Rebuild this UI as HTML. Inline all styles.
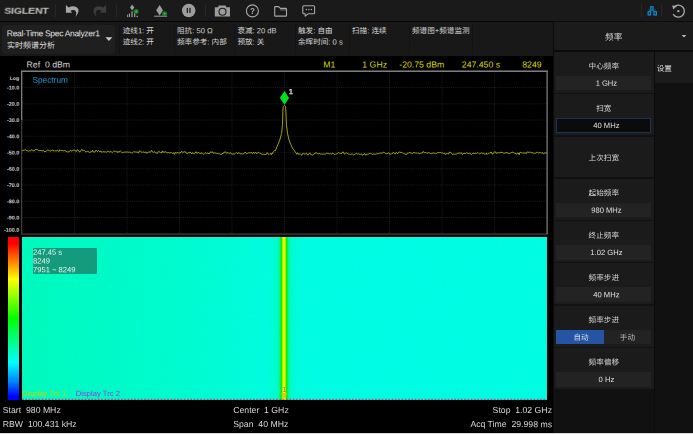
<!DOCTYPE html>
<html><head><meta charset="utf-8"><title>SIGLENT Real-Time Spec Analyzer</title>
<style>
html,body{margin:0;padding:0;background:#000;}
body{width:693px;height:434px;position:relative;overflow:hidden;font-family:"Liberation Sans","Noto Sans CJK SC",sans-serif;color:#d8d8d8;}
div{position:absolute;box-sizing:border-box;white-space:pre;}
.tx{left:0;top:0;}
svg{position:absolute;left:0;top:0;}
#tb{left:0;top:0;width:693px;height:21px;background:#1a1a1a;}
#gap1{left:0;top:20.8px;width:693px;height:1.5px;background:#040404;}
#ib{left:0;top:22.3px;width:552.6px;height:33.4px;background:#181818;}
#mode{left:1.8px;top:24.7px;width:113.2px;height:29px;background:#1f1f1f;border-radius:4px;}
.it{font-size:7.6px;line-height:11.1px;color:#d6d6d6;}
.sep{width:1px;top:23.6px;height:31.6px;background:#131313;}
.vs{width:1px;top:4px;height:13px;background:#272727;}
#plotbg{left:0;top:55.7px;width:553px;height:378.3px;background:#000;}
.t9{font-size:8.7px;line-height:10px;color:#d8d8d8;}
.yl{font-size:5.4px;line-height:7px;font-weight:bold;color:#d0d0d0;}
.mk{font-size:8.7px;line-height:10px;color:#d6d600;}
#rp{left:552.6px;top:21px;width:140.4px;height:413px;background:#0b0b0b;}
#rh{left:553.7px;top:22.3px;width:139.3px;height:28.1px;background:#1b1b1b;}
#side{left:655px;top:51.9px;width:38px;height:382px;background:#111;}
#stab{left:655px;top:51.9px;width:38px;height:31.2px;background:#1b1b1b;}
#colbg{left:553.7px;top:51.9px;width:100.2px;height:382px;background:#111;}
.btn{left:553.7px;width:100.2px;height:40.9px;background:#1b1b1b;}
.bl{font-size:7.6px;line-height:10px;color:#d6d6d6;}
.bv{left:555.8px;width:95.6px;height:14.7px;background:#232323;}
.bv.act{background:#0b0b0b;border:1px solid #1b3359;}
.tg{left:555.8px;width:95.6px;height:13.9px;background:#232323;}
.tga{left:555.8px;width:48.4px;height:13.9px;background:#2454a2;}
#wf{left:22px;top:237.3px;width:525px;height:162.3px;background:linear-gradient(90deg,#00f8b2 0%,#00f9c2 20%,#00fad2 38%,#00fbde 47%,#00fbe2 53%,#00fbe4 70%,#00fbe2 100%);}
#wfl{left:267.3px;top:237.3px;width:34px;height:162.3px;background:linear-gradient(90deg,rgba(0,255,180,0) 0.00%,rgba(0,252,150,.16) 20.59%,rgba(0,252,150,.36) 32.35%,rgba(0,246,100,.62) 37.06%,#0cf224 40.00%,#10ee10 43.24%,#3cee00 44.41%,#f4ff00 46.91%,#f4ff00 53.09%,#3cee00 55.59%,#10ee10 56.76%,#0cf224 60.00%,rgba(0,246,100,.62) 62.94%,rgba(0,252,150,.36) 67.65%,rgba(0,252,150,.16) 79.41%,rgba(0,255,180,0) 100.00%);}
#cb{left:8px;top:237px;width:11px;height:163px;background:linear-gradient(180deg,#ff0000 0%,#ff0000 4%,#ff8000 15%,#ffff00 26%,#80ff00 38%,#00ff00 50%,#00ff80 63%,#00ffff 77%,#0080ff 89%,#0000ff 98%,#0000ff 100%);}
#ibx{left:32.8px;top:247.7px;width:64.6px;height:26.2px;background:rgba(28,118,98,.72);}
.ibt{font-size:7.6px;line-height:8.75px;color:#e8f4f0;}
#bot{left:0;top:432.6px;width:693px;height:1.4px;background:#d8d8d8;}
</style></head><body>
<div id="tb"></div><div id="gap1"></div>
<div id="ib"></div><div id="mode"></div>
<div class="sep" style="left:119px"></div><div class="sep" style="left:174px"></div><div class="sep" style="left:234px"></div><div class="sep" style="left:294.6px"></div><div class="sep" style="left:348.6px"></div><div class="sep" style="left:409px"></div><div class="sep" style="left:472px"></div>
<div class="tx it" style="transform:translate(6.80px,28.20px) rotate(0.03deg);font-size:8.5px;line-height:10.6px;letter-spacing:-0.31px;color:#e0e0e0;">Real-Time Spec Analyzer1</div>
<div class="tx it" style="transform:translate(6.90px,40.00px) rotate(0.03deg);font-size:8px;line-height:11px;color:#e0e0e0;">实时频谱分析</div>
<div class="tx it" style="transform:translate(122.70px,25.30px) rotate(0.03deg);">迹线1: 开</div>
<div class="tx it" style="transform:translate(122.70px,36.40px) rotate(0.03deg);">迹线2: 开</div>
<div class="tx it" style="transform:translate(177.00px,25.30px) rotate(0.03deg);">阻抗: 50 Ω</div>
<div class="tx it" style="transform:translate(177.00px,36.40px) rotate(0.03deg);">频率参考: 内部</div>
<div class="tx it" style="transform:translate(237.40px,25.30px) rotate(0.03deg);">衰减: 20 dB</div>
<div class="tx it" style="transform:translate(237.40px,36.40px) rotate(0.03deg);">预放: 关</div>
<div class="tx it" style="transform:translate(298.00px,25.30px) rotate(0.03deg);">触发: 自由</div>
<div class="tx it" style="transform:translate(298.00px,36.40px) rotate(0.03deg);">余晖时间: 0 s</div>
<div class="tx it" style="transform:translate(352.00px,25.30px) rotate(0.03deg);">扫描: 连续</div>
<div class="tx it" style="transform:translate(412.00px,25.30px) rotate(0.03deg);">频谱图+频谱监测</div>

<div class="tx" id="logo" style="transform-origin:0 0;transform:translate(4.7px,5.8px) scaleX(1.155) skewX(-3deg);font-size:9.2px;line-height:11px;font-weight:bold;color:#bfc1bb;letter-spacing:-0.2px;will-change:transform">SIGLENT</div>
<div class="vs" style="left:55px"></div><div class="vs" style="left:116px"></div><div class="vs" style="left:204.6px"></div><div class="vs" style="left:641.2px"></div><div class="vs" style="left:661.1px"></div>

<svg width="693" height="22" viewBox="0 0 693 22">
<!-- undo -->
<path d="M65.9 4.9 L65.9 12.8 L72.2 12.8 L70.4 10.7 C72.4 9.4 75.4 9.6 76.1 12 C76.5 13.6 76 15.4 75.3 16.9 C77.6 14.8 79 12 78.4 9.6 C77.6 6.4 73 5.2 68.7 7.4 Z" fill="#a6a9a6"/>
<!-- redo dim -->
<path d="M106.1 4.9 L106.1 12.8 L99.8 12.8 L101.6 10.7 C99.6 9.4 96.6 9.6 95.9 12 C95.5 13.6 96 15.4 96.7 16.9 C94.4 14.8 93 12 93.6 9.6 C94.4 6.4 99 5.2 103.3 7.4 Z" fill="#3a3e3c"/>
<!-- marker peak icon -->
<g fill="#9a9d9a"><path d="M132.15 4.6 L134.3 7.6 L132.15 10.6 L130 7.6 Z"/><rect x="127.1" y="14.6" width="1" height="2.5"/><rect x="128.9" y="13.5" width="1.1" height="3.6"/><rect x="131.4" y="11.4" width="1.3" height="5.7"/><rect x="134.1" y="13.1" width="1.2" height="4"/><rect x="136.5" y="15.8" width="1.4" height="1.3"/></g>
<circle cx="136.1" cy="11.4" r="2.5" fill="#1b8029"/><path d="M135 11.4 L136.9 10.4 V12.4 Z" fill="#6cb878"/>
<g fill="#9a9d9a"><path d="M159.6 4.9 L163 10.2 L159.6 15.5 L156.2 10.2 Z"/><rect x="154.1" y="15.7" width="13" height="1"/></g>
<circle cx="164.6" cy="13.65" r="2.5" fill="#1b8029"/><path d="M163.6 13 H165.6 L164.6 14.7 Z" fill="#6cb878"/>
<!-- pause -->
<circle cx="188.7" cy="10.4" r="6.75" fill="#9c9e9c"/><rect x="186.7" y="7.9" width="1.35" height="5" fill="#222"/><rect x="189.3" y="7.9" width="1.35" height="5" fill="#222"/>
<!-- camera -->
<path d="M214.8 7.3 H218 L218.8 5.6 H225.6 L226.4 7.3 H230 V16.6 H214.8 Z" fill="#9a9c9a"/><circle cx="222.5" cy="11.8" r="3.5" fill="none" stroke="#1b1b1b" stroke-width="1.1"/>
<!-- help -->
<circle cx="252.4" cy="10.9" r="6" fill="none" stroke="#a8a8a8" stroke-width="1.1"/>
<text x="252.4" y="13.8" font-size="8.2" font-weight="bold" fill="#a8a8a8" text-anchor="middle" font-family="Liberation Sans, sans-serif">?</text>
<!-- folder -->
<path d="M274.7 7 Q274.7 6.6 275.2 6.6 H278.6 L280.4 8.4 H285.6 Q286.5 8.4 286.5 9.3 V15.4 Q286.5 16.1 285.8 16.1 H275.4 Q274.7 16.1 274.7 15.4 Z" fill="none" stroke="#a8a8a8" stroke-width="1.1" stroke-linejoin="round"/>
<path d="M280.2 9.9 H286" fill="none" stroke="#a8a8a8" stroke-width=".7"/>
<!-- chat -->
<path d="M303.8 5.7 H313.6 Q314.6 5.7 314.6 6.7 V12.8 Q314.6 13.8 313.6 13.8 H308 L305.2 16.2 V13.8 H303.8 Q302.8 13.8 302.8 12.8 V6.7 Q302.8 5.7 303.8 5.7 Z" fill="none" stroke="#a8a8a8" stroke-width="1.1" stroke-linejoin="round"/>
<circle cx="306.4" cy="9.6" r=".75" fill="#a8a8a8"/><circle cx="308.9" cy="9.6" r=".75" fill="#a8a8a8"/><circle cx="311.4" cy="9.6" r=".75" fill="#a8a8a8"/>
<!-- network -->
<g fill="#0c2a40" stroke="#1488d0" stroke-width="1.2"><rect x="650.7" y="6.8" width="2.4" height="3.3"/><rect x="648.1" y="11.7" width="2.5" height="3.3"/><rect x="653.9" y="11.7" width="2.5" height="3.3"/></g>
<path d="M650.4 10.6 L648.4 9.6 M653.4 10.6 L655.6 9.6" stroke="#1488d0" stroke-width=".7" fill="none"/>
<!-- refresh -->
<path d="M674.1 6.86 A6 6 0 1 1 673.15 14.1" fill="none" stroke="#a8aaa8" stroke-width="1.3"/><path d="M672.2 5.4 L677 6 L673.2 9.6 Z" fill="#a8aaa8"/><circle cx="678.35" cy="11.1" r="1.2" fill="#a8aaa8"/>
</svg>

<div id="plotbg"></div>
<div class="tx t9" style="transform:translate(26.60px,59.40px) rotate(0.03deg);">Ref  0 dBm</div>
<div class="tx mk" style="transform:translate(323.30px,59.40px) rotate(0.03deg);">M1</div>
<div class="tx mk" style="transform:translate(327.00px,59.40px) rotate(0.03deg);width:60.0px;text-align:right;">1 GHz</div>
<div class="tx mk" style="transform:translate(384.20px,59.40px) rotate(0.03deg);width:60.0px;text-align:right;">-20.75 dBm</div>
<div class="tx mk" style="transform:translate(440.00px,59.40px) rotate(0.03deg);width:60.0px;text-align:right;">247.450 s</div>
<div class="tx mk" style="transform:translate(481.60px,59.40px) rotate(0.03deg);width:60.0px;text-align:right;">8249</div>

<div class="tx yl" style="transform:translate(0.00px,75.10px) rotate(0.03deg);width:19.1px;text-align:right;font-size:5.1px;">Log</div>
<div class="tx yl" style="transform:translate(0.00px,84.45px) rotate(0.03deg);width:19.3px;text-align:right;">-10.0</div>
<div class="tx yl" style="transform:translate(0.00px,100.70px) rotate(0.03deg);width:19.3px;text-align:right;">-20.0</div>
<div class="tx yl" style="transform:translate(0.00px,116.95px) rotate(0.03deg);width:19.3px;text-align:right;">-30.0</div>
<div class="tx yl" style="transform:translate(0.00px,133.20px) rotate(0.03deg);width:19.3px;text-align:right;">-40.0</div>
<div class="tx yl" style="transform:translate(0.00px,149.45px) rotate(0.03deg);width:19.3px;text-align:right;">-50.0</div>
<div class="tx yl" style="transform:translate(0.00px,165.70px) rotate(0.03deg);width:19.3px;text-align:right;">-60.0</div>
<div class="tx yl" style="transform:translate(0.00px,181.95px) rotate(0.03deg);width:19.3px;text-align:right;">-70.0</div>
<div class="tx yl" style="transform:translate(0.00px,198.20px) rotate(0.03deg);width:19.3px;text-align:right;">-80.0</div>
<div class="tx yl" style="transform:translate(0.00px,214.45px) rotate(0.03deg);width:19.3px;text-align:right;">-90.0</div>
<div class="tx yl" style="transform:translate(0.00px,226.70px) rotate(0.03deg);width:19.3px;text-align:right;">-100.0</div>

<svg width="553" height="434" viewBox="0 0 553 434">
<g stroke="#252525" stroke-width="0.8" stroke-dasharray="1.1 1.1"><line x1="74.50" y1="71.3" x2="74.50" y2="233.8"/><line x1="127.00" y1="71.3" x2="127.00" y2="233.8"/><line x1="179.50" y1="71.3" x2="179.50" y2="233.8"/><line x1="232.00" y1="71.3" x2="232.00" y2="233.8"/><line x1="284.50" y1="71.3" x2="284.50" y2="233.8"/><line x1="337.00" y1="71.3" x2="337.00" y2="233.8"/><line x1="389.50" y1="71.3" x2="389.50" y2="233.8"/><line x1="442.00" y1="71.3" x2="442.00" y2="233.8"/><line x1="494.50" y1="71.3" x2="494.50" y2="233.8"/><line x1="22.0" y1="87.55" x2="547.0" y2="87.55"/><line x1="22.0" y1="103.80" x2="547.0" y2="103.80"/><line x1="22.0" y1="120.05" x2="547.0" y2="120.05"/><line x1="22.0" y1="136.30" x2="547.0" y2="136.30"/><line x1="22.0" y1="152.55" x2="547.0" y2="152.55"/><line x1="22.0" y1="168.80" x2="547.0" y2="168.80"/><line x1="22.0" y1="185.05" x2="547.0" y2="185.05"/><line x1="22.0" y1="201.30" x2="547.0" y2="201.30"/><line x1="22.0" y1="217.55" x2="547.0" y2="217.55"/></g>
<rect x="21.6" y="71" width="525.6" height="163.1" fill="none" stroke="#3e3e3e" stroke-width="1.3"/>
<line x1="21.2" y1="71.3" x2="547.7" y2="71.3" stroke="#9a9a9a" stroke-width="1.05"/><line x1="21.7" y1="71" x2="21.7" y2="120" stroke="#8a8a8a" stroke-width="1.05"/>
<line x1="547.1" y1="71" x2="547.1" y2="234" stroke="#828282" stroke-width="0.9"/>
<polyline points="22.0,150.1 22.8,150.6 23.6,150.3 24.5,150.1 25.3,149.7 26.1,150.0 26.9,150.9 27.7,150.8 28.6,151.2 29.4,150.8 30.2,150.8 31.0,150.7 31.8,149.5 32.7,150.7 33.5,150.9 34.3,150.9 35.1,149.6 35.9,149.1 36.8,149.5 37.6,149.9 38.4,150.5 39.2,150.5 40.0,150.9 40.9,150.3 41.7,150.7 42.5,150.9 43.3,150.3 44.1,151.6 45.0,151.3 45.8,151.6 46.6,150.6 47.4,150.2 48.2,150.3 49.1,150.5 49.9,151.0 50.7,151.0 51.5,150.5 52.4,150.1 53.2,150.2 54.0,151.3 54.8,150.5 55.6,150.8 56.5,151.1 57.3,150.0 58.1,150.6 58.9,151.6 59.7,149.8 60.6,150.3 61.4,150.6 62.2,150.3 63.0,151.0 63.8,150.9 64.7,150.0 65.5,151.1 66.3,151.4 67.1,151.7 67.9,152.1 68.8,151.6 69.6,151.3 70.4,150.3 71.2,151.1 72.0,150.7 72.9,150.6 73.7,150.1 74.5,150.1 75.3,150.4 76.1,151.7 77.0,150.0 77.8,149.8 78.6,150.8 79.4,151.9 80.2,151.8 81.1,150.2 81.9,149.3 82.7,150.7 83.5,150.6 84.3,150.3 85.2,151.5 86.0,152.0 86.8,151.6 87.6,151.5 88.4,151.6 89.3,152.4 90.1,152.1 90.9,151.9 91.7,151.9 92.5,150.5 93.4,151.9 94.2,152.1 95.0,152.0 95.8,150.4 96.6,150.6 97.5,151.7 98.3,150.4 99.1,150.9 99.9,151.9 100.8,150.8 101.6,152.2 102.4,152.1 103.2,151.6 104.0,151.7 104.9,152.0 105.7,151.8 106.5,152.3 107.3,151.4 108.1,151.2 109.0,152.1 109.8,151.8 110.6,151.1 111.4,152.0 112.2,152.7 113.1,151.7 113.9,150.8 114.7,151.3 115.5,151.4 116.3,151.4 117.2,152.5 118.0,151.3 118.8,152.4 119.6,151.2 120.4,151.0 121.3,151.9 122.1,152.5 122.9,152.6 123.7,152.3 124.5,152.0 125.4,152.0 126.2,152.2 127.0,151.9 127.8,152.0 128.6,152.3 129.5,152.0 130.3,152.4 131.1,152.4 131.9,153.3 132.7,152.6 133.6,151.9 134.4,151.7 135.2,151.8 136.0,152.5 136.8,151.9 137.7,152.2 138.5,153.2 139.3,150.8 140.1,150.9 140.9,151.8 141.8,152.2 142.6,152.3 143.4,151.9 144.2,152.4 145.0,152.4 145.9,151.9 146.7,153.5 147.5,152.8 148.3,152.0 149.1,152.0 150.0,152.0 150.8,152.1 151.6,150.4 152.4,151.3 153.2,152.5 154.1,151.6 154.9,152.0 155.7,152.7 156.5,153.0 157.4,153.4 158.2,151.6 159.0,151.8 159.8,151.9 160.6,152.6 161.5,153.1 162.3,150.9 163.1,152.5 163.9,151.5 164.7,152.5 165.6,151.5 166.4,152.2 167.2,153.1 168.0,152.6 168.8,152.6 169.7,153.0 170.5,152.7 171.3,152.5 172.1,153.4 172.9,153.5 173.8,152.7 174.6,154.3 175.4,152.4 176.2,153.1 177.0,152.6 177.9,152.6 178.7,153.0 179.5,152.9 180.3,153.1 181.1,151.8 182.0,151.4 182.8,152.6 183.6,152.0 184.4,151.8 185.2,151.5 186.1,153.0 186.9,153.3 187.7,153.8 188.5,152.5 189.3,152.7 190.2,152.0 191.0,153.0 191.8,153.8 192.6,152.6 193.4,153.7 194.3,153.7 195.1,153.0 195.9,151.7 196.7,153.3 197.5,152.9 198.4,152.5 199.2,153.0 200.0,153.2 200.8,153.9 201.6,152.6 202.5,153.5 203.3,154.1 204.1,154.2 204.9,153.3 205.8,152.6 206.6,153.5 207.4,153.2 208.2,153.2 209.0,153.9 209.9,153.2 210.7,151.7 211.5,152.3 212.3,151.7 213.1,153.1 214.0,153.3 214.8,152.8 215.6,153.0 216.4,153.6 217.2,153.3 218.1,154.0 218.9,153.4 219.7,153.9 220.5,154.4 221.3,154.6 222.2,153.3 223.0,153.8 223.8,152.3 224.6,152.2 225.4,151.7 226.3,153.4 227.1,152.5 227.9,153.0 228.7,153.1 229.5,153.2 230.4,152.9 231.2,153.3 232.0,154.5 232.8,153.8 233.6,153.8 234.5,154.2 235.3,153.5 236.1,152.7 236.9,152.8 237.7,153.9 238.6,152.6 239.4,152.8 240.2,153.8 241.0,154.1 241.8,153.7 242.7,154.1 243.5,153.8 244.3,152.9 245.1,152.3 245.9,152.7 246.8,153.8 247.6,153.3 248.4,152.9 249.2,152.9 250.0,152.4 250.9,153.1 251.7,152.7 252.5,153.5 253.3,152.1 254.1,153.3 255.0,153.1 255.8,152.3 256.6,153.6 257.4,153.5 258.2,152.2 259.1,152.6 259.9,153.5 260.7,153.3 261.5,154.0 262.4,154.3 263.2,154.3 264.0,154.1 264.8,154.7 265.6,154.4 266.5,154.2 267.3,152.6 268.1,153.9 268.9,154.6 269.7,153.8 270.6,153.5 271.4,154.8 272.2,153.0 272.2,153.7 273.3,151.8 274.4,150.6 275.2,150.9 276.1,149.0 277.9,144.5 279.8,139.9 281.6,133.4 282.5,124.2 282.9,111.3 283.2,106.6 284.4,105.3 285.6,106.6 285.9,111.3 286.4,124.2 287.5,133.4 289.0,139.9 290.8,144.5 293.0,149.0 294.2,150.2 295.4,152.2 296.7,153.8 296.8,154.3 297.6,152.8 298.4,154.2 299.3,154.2 300.1,153.6 300.9,154.6 301.7,155.3 302.5,153.5 303.4,153.3 304.2,153.9 305.0,154.0 305.8,153.7 306.6,153.2 307.5,154.9 308.3,154.9 309.1,153.5 309.9,152.9 310.8,154.6 311.6,154.7 312.4,155.3 313.2,154.8 314.0,153.6 314.9,153.9 315.7,152.5 316.5,152.9 317.3,153.5 318.1,154.0 319.0,153.4 319.8,153.6 320.6,154.0 321.4,154.1 322.2,154.3 323.1,154.1 323.9,153.7 324.7,154.2 325.5,154.0 326.3,153.3 327.2,153.2 328.0,153.6 328.8,153.6 329.6,153.8 330.4,153.8 331.3,153.9 332.1,153.7 332.9,153.0 333.7,153.7 334.5,154.4 335.4,154.2 336.2,153.8 337.0,154.0 337.8,153.2 338.6,152.4 339.5,153.3 340.3,153.0 341.1,153.9 341.9,153.1 342.7,151.9 343.6,152.4 344.4,154.2 345.2,153.6 346.0,152.8 346.8,152.9 347.7,153.7 348.5,154.0 349.3,153.9 350.1,154.7 350.9,154.5 351.8,153.9 352.6,154.1 353.4,154.8 354.2,154.7 355.0,154.6 355.9,153.3 356.7,153.4 357.5,154.0 358.3,153.6 359.1,154.3 360.0,154.2 360.8,154.4 361.6,153.8 362.4,155.2 363.2,155.0 364.1,153.9 364.9,153.8 365.7,155.3 366.5,154.0 367.4,154.3 368.2,154.4 369.0,153.9 369.8,153.0 370.6,153.5 371.5,153.8 372.3,154.3 373.1,154.3 373.9,153.8 374.7,154.2 375.6,154.1 376.4,153.9 377.2,153.7 378.0,153.5 378.8,153.9 379.7,153.0 380.5,153.0 381.3,153.3 382.1,152.6 382.9,152.9 383.8,152.1 384.6,152.6 385.4,153.5 386.2,153.9 387.0,153.6 387.9,153.4 388.7,152.6 389.5,154.3 390.3,154.1 391.1,154.4 392.0,153.3 392.8,153.3 393.6,152.3 394.4,153.5 395.2,154.1 396.1,152.5 396.9,153.1 397.7,153.7 398.5,152.5 399.3,152.0 400.2,152.3 401.0,152.6 401.8,152.3 402.6,153.1 403.4,153.5 404.3,153.8 405.1,154.0 405.9,154.6 406.7,154.5 407.5,153.0 408.4,153.0 409.2,152.6 410.0,152.5 410.8,153.0 411.6,153.3 412.5,153.7 413.3,152.5 414.1,152.3 414.9,153.0 415.8,153.1 416.6,153.1 417.4,153.2 418.2,152.9 419.0,153.6 419.9,153.7 420.7,153.4 421.5,153.0 422.3,153.1 423.1,151.6 424.0,152.1 424.8,152.9 425.6,152.3 426.4,153.1 427.2,153.3 428.1,152.5 428.9,152.9 429.7,153.0 430.5,153.5 431.3,153.8 432.2,153.4 433.0,152.8 433.8,153.0 434.6,153.2 435.4,153.7 436.3,153.6 437.1,153.0 437.9,152.3 438.7,152.7 439.5,152.6 440.4,152.4 441.2,152.9 442.0,152.8 442.8,153.2 443.6,153.6 444.5,153.1 445.3,154.6 446.1,153.5 446.9,154.0 447.7,153.6 448.6,154.1 449.4,152.0 450.2,152.3 451.0,153.1 451.8,153.5 452.7,154.8 453.5,154.0 454.3,154.3 455.1,154.1 455.9,154.1 456.8,153.8 457.6,153.3 458.4,153.6 459.2,152.6 460.0,153.7 460.9,152.7 461.7,153.2 462.5,154.5 463.3,153.5 464.1,153.3 465.0,153.9 465.8,153.4 466.6,152.8 467.4,153.2 468.2,153.5 469.1,153.7 469.9,152.9 470.7,154.1 471.5,154.5 472.4,153.6 473.2,153.5 474.0,153.0 474.8,153.9 475.6,153.0 476.5,153.5 477.3,152.9 478.1,152.6 478.9,153.4 479.7,154.0 480.6,153.4 481.4,152.8 482.2,153.5 483.0,153.2 483.8,153.3 484.7,154.1 485.5,154.1 486.3,153.1 487.1,154.5 487.9,153.6 488.8,153.7 489.6,152.9 490.4,153.0 491.2,151.9 492.0,153.8 492.9,154.1 493.7,152.7 494.5,152.0 495.3,151.7 496.1,153.3 497.0,152.8 497.8,152.9 498.6,152.8 499.4,152.9 500.2,152.3 501.1,152.8 501.9,152.0 502.7,152.6 503.5,153.1 504.3,153.3 505.2,153.0 506.0,152.4 506.8,152.9 507.6,152.6 508.4,153.8 509.3,153.7 510.1,153.2 510.9,152.7 511.7,152.4 512.5,152.2 513.4,152.5 514.2,153.0 515.0,153.3 515.8,153.4 516.6,154.4 517.5,153.0 518.3,153.0 519.1,154.7 519.9,152.4 520.8,152.4 521.6,152.8 522.4,153.0 523.2,153.2 524.0,152.9 524.9,153.1 525.7,153.0 526.5,153.4 527.3,151.9 528.1,152.0 529.0,152.6 529.8,152.1 530.6,152.0 531.4,152.9 532.2,152.5 533.1,153.1 533.9,153.4 534.7,153.2 535.5,153.3 536.3,152.9 537.2,152.0 538.0,152.5 538.8,153.0 539.6,152.6 540.4,152.7 541.3,153.2 542.1,152.4 542.9,153.1 543.7,154.1 544.5,152.9 545.4,152.9 546.2,152.8 547.0,153.7" fill="none" stroke="#cccc12" stroke-width="0.8" stroke-linejoin="round"/>
<path d="M284.5 91.1 L289.1 97.9 L284.5 104.7 L279.9 97.9 Z" fill="#00e11e"/>
<text x="288.7" y="93.8" font-size="7.7" fill="#e4e6ea" stroke="#e4e6ea" stroke-width=".25" font-family="Liberation Sans, sans-serif">1</text>
</svg>
<div class="tx t9" style="transform:translate(32.40px,74.80px) rotate(0.03deg);color:#1aa0d2;font-size:8.3px;">Spectrum</div>

<div id="cb"></div>
<div id="wf"></div><svg width="553" height="434" viewBox="0 0 553 434"><filter id="nz" x="0" y="0" width="100%" height="100%"><feTurbulence type="fractalNoise" baseFrequency="0.75" numOctaves="2" seed="4"/><feColorMatrix type="matrix" values="0 0 0 0 0  0 0 0 0 1  2.2 0 0 0 -0.3  0 0 0 0 0.24"/></filter><rect x="22" y="237.3" width="525" height="162.3" filter="url(#nz)"/></svg><div id="wfl"></div>
<div id="ibx"></div>
<div class="tx ibt" style="transform:translate(33.00px,248.70px) rotate(0.03deg);">247.45 s</div>
<div class="tx ibt" style="transform:translate(33.00px,257.45px) rotate(0.03deg);">8249</div>
<div class="tx ibt" style="transform:translate(33.00px,266.20px) rotate(0.03deg);">7951 ~ 8249</div>

<div class="tx t9" style="transform:translate(22.10px,389.00px) rotate(0.03deg);color:#c4d400;font-size:7.65px;">Display Trc 1</div>

<div class="tx t9" style="transform:translate(75.80px,389.00px) rotate(0.03deg);color:#9838dc;font-size:7.65px;">Display Trc 2</div>

<svg width="553" height="434" viewBox="0 0 553 434">
<line x1="22" y1="399.3" x2="547" y2="399.3" stroke="#c8308a" stroke-width="1" stroke-dasharray="1.7 1.6"/>
<path d="M281.3 393 H287.1 L284.2 398.9 Z" fill="#e6c800"/>
<text x="284.2" y="391.7" font-size="7" text-anchor="middle" fill="#e23ca4" font-family="Liberation Sans, sans-serif">1</text>
</svg>
<div class="tx t9" style="transform:translate(2.80px,405.00px) rotate(0.03deg);">Start  980 MHz</div>
<div class="tx t9" style="transform:translate(2.80px,419.10px) rotate(0.03deg);">RBW  100.431 kHz</div>
<div class="tx t9" style="transform:translate(233.20px,405.00px) rotate(0.03deg);">Center  1 GHz</div>
<div class="tx t9" style="transform:translate(233.20px,419.10px) rotate(0.03deg);">Span  40 MHz</div>
<div class="tx t9" style="transform:translate(402.00px,405.00px) rotate(0.03deg);width:150.0px;text-align:right;">Stop  1.02 GHz</div>
<div class="tx t9" style="transform:translate(402.00px,419.10px) rotate(0.03deg);width:150.0px;text-align:right;">Acq Time  29.998 ms</div>

<div id="rp"></div><div id="rh"></div>
<div class="tx it" style="transform:translate(553.70px,32.00px) rotate(0.03deg);width:120.0px;text-align:center;font-size:8.6px;line-height:10px;">频率</div>

<svg width="693" height="60" viewBox="0 0 693 60"><path d="M681.6 34.9 H686.4 L684 37.5 Z" fill="#b4b4b4"/><path d="M105.4 37.3 H112.4 L108.9 41 Z" fill="#c8c8c8"/></svg>
<div id="colbg"></div><div id="side"></div><div id="stab"></div>
<div class="tx bl" style="transform:translate(656.70px,64.10px) rotate(0.03deg);">设置</div>

<div class="btn" style="top:51.9px"></div><div class="tx bl" style="transform:translate(553.70px,61.70px) rotate(0.03deg);width:100.2px;text-align:center;">中心频率</div>
<div class="bv" style="top:75.8px"></div><div class="tx bl" style="transform:translate(561.40px,78.80px) rotate(0.03deg);width:90.0px;text-align:center;color:#e0e0e0;">1 GHz</div>
<div class="btn" style="top:94.2px"></div><div class="tx bl" style="transform:translate(553.70px,104.00px) rotate(0.03deg);width:100.2px;text-align:center;">扫宽</div>
<div class="bv act" style="top:118.1px"></div><div class="tx bl" style="transform:translate(561.40px,121.10px) rotate(0.03deg);width:90.0px;text-align:center;color:#e0e0e0;">40 MHz</div>
<div class="btn" style="top:136.5px"></div><div class="tx bl" style="transform:translate(553.70px,153.50px) rotate(0.03deg);width:100.2px;text-align:center;">上次扫宽</div>
<div class="btn" style="top:178.8px"></div><div class="tx bl" style="transform:translate(553.70px,188.60px) rotate(0.03deg);width:100.2px;text-align:center;">起始频率</div>
<div class="bv" style="top:202.7px"></div><div class="tx bl" style="transform:translate(561.40px,205.70px) rotate(0.03deg);width:90.0px;text-align:center;color:#e0e0e0;">980 MHz</div>
<div class="btn" style="top:221.1px"></div><div class="tx bl" style="transform:translate(553.70px,230.90px) rotate(0.03deg);width:100.2px;text-align:center;">终止频率</div>
<div class="bv" style="top:245.0px"></div><div class="tx bl" style="transform:translate(561.40px,248.00px) rotate(0.03deg);width:90.0px;text-align:center;color:#e0e0e0;">1.02 GHz</div>
<div class="btn" style="top:263.4px"></div><div class="tx bl" style="transform:translate(553.70px,273.20px) rotate(0.03deg);width:100.2px;text-align:center;">频率步进</div>
<div class="bv" style="top:287.3px"></div><div class="tx bl" style="transform:translate(561.40px,290.30px) rotate(0.03deg);width:90.0px;text-align:center;color:#e0e0e0;">40 MHz</div>
<div class="btn" style="top:305.7px"></div><div class="tx bl" style="transform:translate(553.70px,315.50px) rotate(0.03deg);width:100.2px;text-align:center;">频率步进</div>
<div class="tg" style="top:330.0px"></div><div class="tga" style="top:330.0px"></div><div class="tx bl" style="transform:translate(555.80px,333.00px) rotate(0.03deg);width:50.4px;text-align:center;color:#d4dcec;">自动</div>
<div class="tx bl" style="transform:translate(603.40px,333.00px) rotate(0.03deg);width:48.0px;text-align:center;color:#bcbcbc;">手动</div>
<div class="btn" style="top:348.0px"></div><div class="tx bl" style="transform:translate(553.70px,357.80px) rotate(0.03deg);width:100.2px;text-align:center;">频率偏移</div>
<div class="bv" style="top:371.9px"></div><div class="tx bl" style="transform:translate(561.40px,374.90px) rotate(0.03deg);width:90.0px;text-align:center;color:#e0e0e0;">0 Hz</div>

<div id="bot"></div>
</body></html>
